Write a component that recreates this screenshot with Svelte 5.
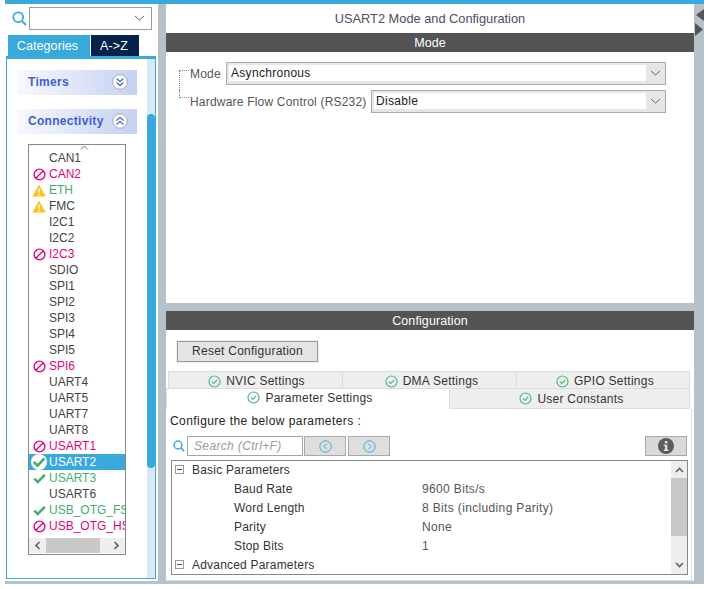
<script>
  const peripherals = [
    { name: "CAN1" },
    { name: "CAN2", state: "blocked" },
    { name: "ETH", state: "warn", color: "green" },
    { name: "FMC", state: "warn" },
    { name: "I2C1" },
    { name: "I2C2" },
    { name: "I2C3", state: "blocked" },
    { name: "SDIO" },
    { name: "SPI1" },
    { name: "SPI2" },
    { name: "SPI3" },
    { name: "SPI4" },
    { name: "SPI5" },
    { name: "SPI6", state: "blocked" },
    { name: "UART4" },
    { name: "UART5" },
    { name: "UART7" },
    { name: "UART8" },
    { name: "USART1", state: "blocked" },
    { name: "USART2", state: "active" },
    { name: "USART3", state: "ok" },
    { name: "USART6" },
    { name: "USB_OTG_FS", state: "ok" },
    { name: "USB_OTG_HS", state: "blocked" },
  ];

  const params = [
    { name: "Baud Rate", value: "9600 Bits/s" },
    { name: "Word Length", value: "8 Bits (including Parity)" },
    { name: "Parity", value: "None" },
    { name: "Stop Bits", value: "1" },
  ];
</script>

{#snippet okCircle()}
  <svg class="ok-circle" viewBox="0 0 13 13" width="13" height="13">
    <circle cx="6.5" cy="6.5" r="5.5" fill="none" stroke="#4dbb85" stroke-width="1.2" />
    <path d="M4 6.6 L5.9 8.5 L9.2 4.8" fill="none" stroke="#4dbb85" stroke-width="1.2" />
  </svg>
{/snippet}

{#snippet searchIcon(size)}
  <svg viewBox="0 0 14 14" width={size} height={size}>
    <circle cx="5.8" cy="5.8" r="4.6" fill="none" stroke="#39a9dc" stroke-width="1.7" />
    <path d="M9.2 9.2 L13 13" stroke="#39a9dc" stroke-width="1.9" />
  </svg>
{/snippet}

{#snippet chevron()}
  <svg viewBox="0 0 11 6" width="11" height="6">
    <path d="M1 1 L5.5 5 L10 1" fill="none" stroke="#666" stroke-width="1" />
  </svg>
{/snippet}

{#snippet expander()}
  <span class="expander"></span>
{/snippet}

<div class="shell">
  <div class="topbar"></div>
  <div class="columns">
    <aside class="left">
      <div class="search-row">
        {@render searchIcon(15)}
        <div class="combo">{@render chevron()}</div>
      </div>
      <div class="tabs">
        <div class="tab on">Categories</div>
        <div class="tab dark">A-&gt;Z</div>
      </div>
      <div class="panel">
        <div class="panel-body">
          <div class="band">
            <span>Timers</span>
            <svg viewBox="0 0 16 16" width="16" height="16">
              <circle cx="8" cy="8" r="7.3" fill="#fff" stroke="#a9a9b5" />
              <path d="M4.5 4.5 L8 7.5 L11.5 4.5 M4.5 8.5 L8 11.5 L11.5 8.5" fill="none" stroke="#3c62d8" stroke-width="1.1" />
            </svg>
          </div>
          <div class="band">
            <span>Connectivity</span>
            <svg viewBox="0 0 16 16" width="16" height="16">
              <circle cx="8" cy="8" r="7.3" fill="#fff" stroke="#a9a9b5" />
              <path d="M4.5 7.5 L8 4.5 L11.5 7.5 M4.5 11.5 L8 8.5 L11.5 11.5" fill="none" stroke="#3c62d8" stroke-width="1.1" />
            </svg>
          </div>
          <div class="listbox">
            <svg class="caret-up" viewBox="0 0 9 5" width="9" height="5">
              <path d="M1 4.5 L4.5 1 L8 4.5" fill="none" stroke="#777" stroke-width="1" />
            </svg>
            <ul>
              {#each peripherals as p}
                <li class:selected={p.state === "active"} class={p.color ?? p.state ?? ""}>
                  <span class="status">
                    {#if p.state === "blocked"}
                      <svg viewBox="0 0 13 13" width="13" height="13">
                        <circle cx="6.5" cy="6.5" r="5.4" fill="none" stroke="#e6007e" stroke-width="1.4" />
                        <path d="M2.9 10.1 L10.1 2.9" stroke="#e6007e" stroke-width="1.4" />
                      </svg>
                    {:else if p.state === "warn"}
                      <svg viewBox="0 0 14 13" width="14" height="13">
                        <path d="M7 0.5 L13.7 12.5 L0.3 12.5 Z" fill="#fbc31d" />
                        <rect x="6.3" y="4.5" width="1.4" height="4.5" fill="#fff" />
                        <rect x="6.3" y="9.8" width="1.4" height="1.5" fill="#fff" />
                      </svg>
                    {:else if p.state === "ok"}
                      <svg viewBox="0 0 13 11" width="13" height="11">
                        <path d="M1.2 5.6 L4.8 9 L11.8 1.8" fill="none" stroke="#48ab72" stroke-width="2.6" />
                      </svg>
                    {:else if p.state === "active"}
                      <svg viewBox="0 0 16 16" width="16" height="16">
                        <circle cx="8" cy="8" r="8" fill="#fff" />
                        <path d="M2.8 8 L6.6 11.6 L13.4 4.4" fill="none" stroke="#48ab72" stroke-width="2.6" />
                      </svg>
                    {/if}
                  </span>
                  <span class="label">{p.name}</span>
                </li>
              {/each}
            </ul>
            <div class="hscroll">
              <svg viewBox="0 0 7 9" width="7" height="9">
                <path d="M5.5 1 L2 4.5 L5.5 8" fill="none" stroke="#666" stroke-width="1.7" />
              </svg>
              <div class="hthumb"></div>
              <svg viewBox="0 0 7 9" width="7" height="9">
                <path d="M1.5 1 L5 4.5 L1.5 8" fill="none" stroke="#666" stroke-width="1.7" />
              </svg>
            </div>
          </div>
        </div>
        <div class="vtrack"><div class="vthumb"></div></div>
      </div>
    </aside>

    <main class="right">
      <section class="mode">
        <div class="title">USART2 Mode and Configuration</div>
        <div class="bar">Mode</div>
        <div class="form">
          <div class="form-row">
            <span class="branch first"></span>
            <span class="lab lab-mode">Mode</span>
            <div class="select">
              <div class="select-value">Asynchronous</div>
              <div class="select-arrow">{@render chevron()}</div>
            </div>
          </div>
          <div class="form-row">
            <span class="branch last"></span>
            <span class="lab lab-flow">Hardware Flow Control (RS232)</span>
            <div class="select">
              <div class="select-value">Disable</div>
              <div class="select-arrow">{@render chevron()}</div>
            </div>
          </div>
        </div>
      </section>

      <section class="config">
        <div class="bar">Configuration</div>
        <div class="reset-wrap"><button class="reset">Reset Configuration</button></div>
        <div class="tab-row top">
          <div class="cfg-tab nvic">{@render okCircle()} NVIC Settings</div>
          <div class="cfg-tab dma">{@render okCircle()} DMA Settings</div>
          <div class="cfg-tab gpio">{@render okCircle()} GPIO Settings</div>
        </div>
        <div class="tab-row bottom">
          <div class="cfg-tab active">{@render okCircle()} Parameter Settings</div>
          <div class="cfg-tab user">{@render okCircle()} User Constants</div>
        </div>
        <div class="content">
          <div class="configure">Configure the below parameters :</div>
          <div class="tools">
            <span class="tool-icon">{@render searchIcon(12)}</span>
            <div class="find">Search (Ctrl+F)</div>
            <button class="nav">
              <svg viewBox="0 0 13 13" width="13" height="13">
                <circle cx="6.5" cy="6.5" r="5.7" fill="none" stroke="#39a9dc" />
                <path d="M7.6 3.8 L5 6.5 L7.6 9.2" fill="none" stroke="#39a9dc" />
              </svg>
            </button>
            <button class="nav">
              <svg viewBox="0 0 13 13" width="13" height="13">
                <circle cx="6.5" cy="6.5" r="5.7" fill="none" stroke="#39a9dc" />
                <path d="M5.4 3.8 L8 6.5 L5.4 9.2" fill="none" stroke="#39a9dc" />
              </svg>
            </button>
            <button class="info">
              <svg viewBox="0 0 16 16" width="16" height="16">
                <circle cx="8" cy="8" r="8" fill="#5c5c5c" />
                <rect x="6.8" y="3" width="2.6" height="2.4" fill="#e0e0e0" />
                <path d="M5.8 6.7 H9.3 V11.6 H10.4 V13 H5.8 V11.6 H6.9 V8 H5.8 Z" fill="#e0e0e0" />
              </svg>
            </button>
          </div>
          <div class="tree">
            <div class="tree-rows">
              <div class="tree-row group">{@render expander()}<span>Basic Parameters</span></div>
              {#each params as row}
                <div class="tree-row">
                  <span class="p-name">{row.name}</span>
                  <span class="p-value">{row.value}</span>
                </div>
              {/each}
              <div class="tree-row group">{@render expander()}<span>Advanced Parameters</span></div>
            </div>
            <div class="tree-scroll">
              <svg viewBox="0 0 9 6" width="9" height="6">
                <path d="M1 5 L4.5 1.5 L8 5" fill="none" stroke="#666" stroke-width="1.7" />
              </svg>
              <div class="tree-thumb"></div>
              <svg viewBox="0 0 9 6" width="9" height="6">
                <path d="M1 1 L4.5 4.5 L8 1" fill="none" stroke="#666" stroke-width="1.7" />
              </svg>
            </div>
          </div>
        </div>
      </section>
    </main>

    <div class="edge">
      <svg viewBox="0 0 9 29" width="9" height="29">
        <path d="M9 2 L1 8 L9 14 Z" fill="#555" />
        <path d="M0 16 L8 22.5 L0 29 Z" fill="#555" />
      </svg>
    </div>
  </div>
</div>

<style>
  :global(body) {
    background: #fff;
    font-family: "Liberation Sans", Arial, sans-serif;
    font-size: 12px;
    color: #444;
  }
  .shell {
    width: 699px;
    margin-left: 5px;
  }
  .topbar {
    height: 4px;
    background: #39a9dc;
  }
  .columns {
    display: flex;
    height: 577px;
    padding-bottom: 3px;
    background: #b6c2c9;
  }

  /* left column */
  .left {
    width: 153px;
    flex: none;
    background: #fff;
    display: flex;
    flex-direction: column;
  }
  .search-row {
    display: flex;
    align-items: center;
    height: 24px;
    margin-top: 2px;
    padding-left: 7px;
    gap: 2px;
  }
  .combo {
    height: 23px;
    border: 1px solid #9a9a9a;
    display: flex;
    align-items: center;
    justify-content: flex-end;
    padding-right: 6px;
    box-sizing: border-box;
    width: 123px;
  }
  .tabs {
    display: flex;
    gap: 1px;
    margin: 5px 0 0 3px;
    height: 21px;
  }
  .tab {
    display: flex;
    align-items: center;
    justify-content: center;
    color: #fff;
    font-size: 12.5px;
    letter-spacing: 0.1px;
  }
  .tab.on {
    width: 82px;
    padding-right: 3px;
    box-sizing: border-box;
    background: #39a9dc;
  }
  .tab.dark {
    width: 48px;
    padding-right: 2px;
    box-sizing: border-box;
    background: #03234b;
  }
  .panel {
    margin-left: 1px;
    width: 150px;
    height: 523px;
    box-sizing: border-box;
    border: 1px solid #39a9dc;
    border-top-width: 3px;
    display: flex;
  }
  .panel-body {
    flex: 1;
    padding: 11px 0 0 10px;
  }
  .band {
    width: 120px;
    height: 25px;
    margin-bottom: 14px;
    box-sizing: border-box;
    padding: 0 9px 2px 11px;
    display: flex;
    align-items: center;
    justify-content: space-between;
    background: linear-gradient(to right, #f8f9fe, #c5d1f3);
    color: #3f5fd0;
    font-weight: bold;
    letter-spacing: 0.3px;
  }
  .band:nth-child(2) {
    margin-bottom: 10px;
  }
  .listbox {
    position: relative;
    width: 98px;
    margin-left: 11px;
    height: 411px;
    box-sizing: border-box;
    border: 1px solid #85888c;
    display: flex;
    flex-direction: column;
  }
  .caret-up {
    position: absolute;
    left: 51px;
    top: 0;
  }
  ul {
    list-style: none;
    margin: 0;
    padding: 5px 0 0;
    flex: 1;
    overflow: hidden;
  }
  li {
    height: 16px;
    display: flex;
    align-items: center;
    white-space: nowrap;
    overflow: hidden;
  }
  li.blocked {
    color: #e6007e;
  }
  li.green,
  li.ok {
    color: #3fae6c;
  }
  li.selected {
    background: #39a9dc;
    color: #fff;
  }
  .status {
    width: 20px;
    flex: none;
    display: flex;
    align-items: center;
    justify-content: center;
  }
  .hscroll {
    height: 15px;
    margin-bottom: 1px;
    background: #eee;
    display: flex;
    align-items: center;
    padding: 0 5px;
  }
  .hthumb {
    width: 54px;
    height: 15px;
    margin: 0 auto 0 5px;
    background: #c8c8c8;
  }
  .vtrack {
    width: 8px;
    background: #d9e8f5;
  }
  .vthumb {
    margin-top: 55px;
    height: 354px;
    background: #39a9dc;
    border-radius: 4px;
  }

  /* right column */
  .right {
    width: 528px;
    flex: none;
    margin-left: 8px;
    display: flex;
    flex-direction: column;
    gap: 8px;
  }
  .mode {
    height: 299px;
    flex: none;
    background: #fff;
  }
  .title {
    height: 29px;
    display: flex;
    align-items: center;
    justify-content: center;
    color: #4d4d62;
    font-size: 12.8px;
  }
  .bar {
    height: 19px;
    flex: none;
    background: #535453;
    color: #fff;
    display: flex;
    align-items: center;
    justify-content: center;
    font-size: 12.5px;
    letter-spacing: 0.1px;
  }
  .form {
    padding: 10px 28px 0 13px;
    display: flex;
    flex-direction: column;
    gap: 5px;
  }
  .form-row {
    display: flex;
    align-items: center;
    height: 23px;
  }
  .branch {
    width: 10px;
    margin-right: 1px;
    flex: none;
    align-self: flex-start;
    box-sizing: border-box;
    border-left: 1px dotted #888;
  }
  .branch.first {
    height: 20px;
    margin-top: 8px;
    border-top: 1px dotted #888;
  }
  .branch.last {
    height: 8px;
    border-bottom: 1px dotted #888;
  }
  .lab {
    flex: none;
    color: #555;
    letter-spacing: 0.2px;
  }
  .lab-mode {
    width: 36px;
  }
  .lab-flow {
    width: 181px;
  }
  .select {
    flex: 1;
    height: 23px;
    box-sizing: border-box;
    border: 1px solid #ababab;
    padding: 2px 0 3px 2px;
    background: #e6e6e6;
    display: flex;
  }
  .select-value {
    flex: 1;
    background: #fff;
    color: #222;
    padding-left: 2px;
    line-height: 16px;
    letter-spacing: 0.3px;
  }
  .select-arrow {
    width: 19px;
    display: flex;
    align-items: center;
    justify-content: center;
  }
  .config {
    flex: 1;
    min-height: 0;
    background: #fff;
    display: flex;
    flex-direction: column;
    border-bottom: 1px solid #ddd;
  }
  .reset-wrap {
    padding: 11px 0 0 11px;
    height: 21px;
    flex: none;
  }
  .reset {
    display: block;
    width: 141px;
    height: 21px;
    box-sizing: border-box;
    padding: 0 0 2px;
    border: 1px solid #9a9a9a;
    outline: 1px solid #eee;
    background: #e4e4e4;
    color: #333;
    font: inherit;
    letter-spacing: 0.25px;
  }
  .tab-row {
    display: flex;
    flex: none;
  }
  .tab-row.top {
    margin: 9px 0 0 2px;
    height: 17px;
    overflow: hidden;
  }
  .tab-row.bottom {
    height: 21px;
  }
  .cfg-tab {
    box-sizing: border-box;
    background: #eee;
    border: 1px solid #ddd;
    display: flex;
    align-items: center;
    justify-content: center;
    gap: 5px;
    padding-left: 4px;
    color: #333;
    letter-spacing: 0.25px;
  }
  .tab-row.top .cfg-tab {
    height: 17px;
    padding-top: 2px;
    border-bottom: 0;
  }
  .cfg-tab.nvic {
    width: 175px;
    padding-left: 2px;
  }
  .cfg-tab.dma {
    width: 174px;
    border-left: 0;
  }
  .cfg-tab.gpio {
    width: 173px;
    border-left: 0;
  }
  .cfg-tab.active {
    width: 284px;
    background: #fff;
    border-bottom: 0;
    padding-bottom: 3px;
  }
  .cfg-tab.user {
    width: 240px;
    border-left: 0;
  }
  .content {
    flex: 1;
    width: 526px;
    box-sizing: border-box;
    border-right: 1px solid #ddd;
    padding: 0 0 0 4px;
  }
  .configure {
    height: 24px;
    display: flex;
    align-items: center;
    color: #222;
    letter-spacing: 0.43px;
  }
  .tools {
    display: flex;
    align-items: center;
    height: 20px;
    margin-top: 3px;
  }
  .tool-icon {
    width: 17px;
    padding-left: 3px;
    box-sizing: border-box;
    display: flex;
  }
  .find {
    width: 116px;
    height: 20px;
    box-sizing: border-box;
    border: 1px solid #a5a5a5;
    padding-left: 6px;
    line-height: 18px;
    color: #9a9a9a;
    font-style: italic;
    letter-spacing: 0.35px;
  }
  .nav {
    width: 42px;
    height: 20px;
    margin-left: 1px;
    padding: 0;
    box-sizing: border-box;
    background: #dedede;
    border: 1px solid #a8a8a8;
    display: flex;
    align-items: center;
    justify-content: center;
  }
  .nav + .nav {
    margin-left: 2px;
  }
  .info {
    width: 42px;
    height: 20px;
    margin-left: 255px;
    padding: 0;
    box-sizing: border-box;
    background: #d8d8d8;
    border: 1px solid #a8a8a8;
    display: flex;
    align-items: center;
    justify-content: center;
  }
  .tree {
    margin: 4px 0 0 1px;
    width: 517px;
    height: 115px;
    box-sizing: border-box;
    border: 1px solid #85888c;
    display: flex;
  }
  .tree-rows {
    flex: 1;
    margin-top: -1px;
  }
  .tree-row {
    height: 19px;
    display: flex;
    align-items: center;
    color: #333;
    letter-spacing: 0.2px;
  }
  .tree-row.group {
    padding-left: 3px;
  }
  .expander {
    position: relative;
    width: 9px;
    height: 9px;
    box-sizing: border-box;
    border: 1px solid #999;
    margin-right: 8px;
    display: block;
  }
  .expander::after {
    content: "";
    position: absolute;
    left: 1px;
    top: 3px;
    width: 5px;
    height: 1px;
    background: #3a4a9a;
  }
  .p-name {
    margin-left: 62px;
    width: 188px;
    flex: none;
  }
  .p-value {
    color: #555;
    letter-spacing: 0.35px;
  }
  .tree-scroll {
    width: 16px;
    background: #eee;
    display: flex;
    flex-direction: column;
    align-items: center;
    padding-top: 6px;
    box-sizing: border-box;
  }
  .tree-thumb {
    width: 16px;
    height: 58px;
    margin: 5px 0 26px;
    background: #c8c8c8;
  }
  .edge {
    width: 10px;
    flex: none;
    padding-top: 3px;
  }
  .edge svg {
    display: block;
    margin-left: 1px;
  }
</style>
